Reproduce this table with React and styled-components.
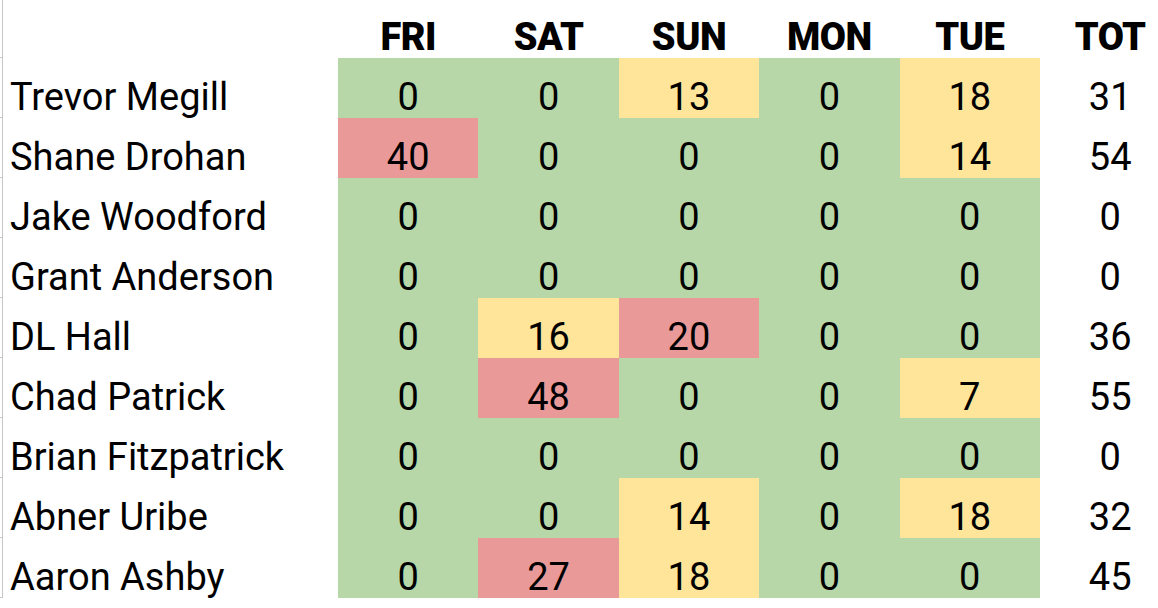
import React from 'react';
import styled, { createGlobalStyle } from 'styled-components';

const GlobalStyle = createGlobalStyle`
    html, body {
        margin: 0;
        padding: 0;
        background: #ffffff;
        overflow: hidden;
    }
`;

const COLORS = {
    green: '#b7d7a8',
    yellow: '#ffe599',
    red: '#ea9999',
};

const DAYS = ['FRI', 'SAT', 'SUN', 'MON', 'TUE'];

const PLAYERS = [
    { name: 'Trevor Megill', pitches: [0, 0, 13, 0, 18] },
    { name: 'Shane Drohan', pitches: [40, 0, 0, 0, 14] },
    { name: 'Jake Woodford', pitches: [0, 0, 0, 0, 0] },
    { name: 'Grant Anderson', pitches: [0, 0, 0, 0, 0] },
    { name: 'DL Hall', pitches: [0, 16, 20, 0, 0] },
    { name: 'Chad Patrick', pitches: [0, 48, 0, 0, 7] },
    { name: 'Brian Fitzpatrick', pitches: [0, 0, 0, 0, 0] },
    { name: 'Abner Uribe', pitches: [0, 0, 14, 0, 18] },
    { name: 'Aaron Ashby', pitches: [0, 27, 18, 0, 0] },
];

const toneFor = (count) => {
    if (count >= 20) return 'red';
    if (count > 0) return 'yellow';
    return 'green';
};

const Sheet = styled.div`
    display: grid;
    grid-template-columns: 3px 335px repeat(6, 140.4px);
    grid-auto-rows: 60px;
    grid-template-rows: 58px;
    width: 1180px;
    font-family: Roboto, "Liberation Sans", sans-serif;
    color: #000;
`;

const Stub = styled.div`
    border-right: 1px solid #c6c6c6;
    border-bottom: 1px solid #c6c6c6;
    box-sizing: border-box;
    margin-right: 0;
`;

const Cell = styled.div`
    display: flex;
    align-items: flex-end;
    justify-content: ${({ $left }) => ($left ? 'flex-start' : 'center')};
    padding-left: ${({ $left }) => ($left ? '7px' : '0')};
    background: ${({ $tone }) => ($tone ? COLORS[$tone] : 'transparent')};
    font-size: 38px;
    line-height: 42px;
    white-space: nowrap;
`;

const HeadCell = styled(Cell)`
    font-weight: 900;
    letter-spacing: -0.5px;
`;

const App = () => {
    return (
        <>
            <GlobalStyle />
            <Sheet>
                <Stub />
                <HeadCell $left />
                {DAYS.map((day) => (
                    <HeadCell key={day}>{day}</HeadCell>
                ))}
                <HeadCell>TOT</HeadCell>

                {PLAYERS.map((player) => {
                    const total = player.pitches.reduce((sum, n) => sum + n, 0);
                    return (
                        <React.Fragment key={player.name}>
                            <Stub />
                            <Cell $left>{player.name}</Cell>
                            {player.pitches.map((count, i) => (
                                <Cell key={DAYS[i]} $tone={toneFor(count)}>
                                    {count}
                                </Cell>
                            ))}
                            <Cell>{total}</Cell>
                        </React.Fragment>
                    );
                })}
            </Sheet>
        </>
    );
};

export default App;
